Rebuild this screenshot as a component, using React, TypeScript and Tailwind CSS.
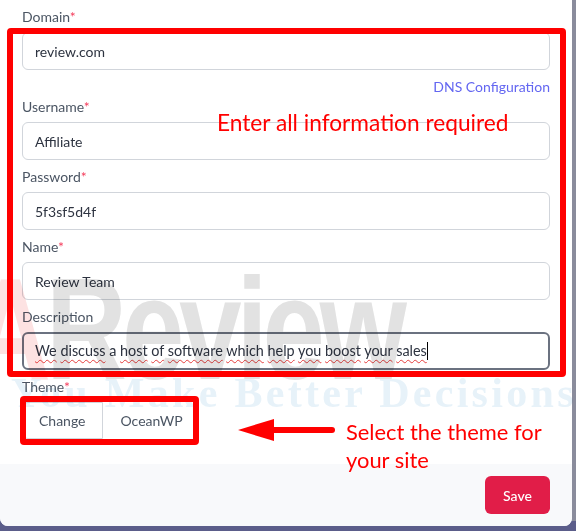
import React from "react";

const font = { fontFamily: "Lato, 'Noto Sans', sans-serif" };

function Label({ text, req = true }: { text: string; req?: boolean }) {
  return (
    <div className="h-5 leading-5 text-[14px] text-[#4b5563]">
      {text}
      {req && <span className="text-[#f43f5e]">*</span>}
    </div>
  );
}

function Input({ value }: { value: string }) {
  return (
    <div className="mt-[5px] h-[38px] rounded-md border border-[#d1d5db] bg-white px-3 flex items-center text-[14px] text-[#2d3340]">
      {value}
    </div>
  );
}

const words = "We discuss a host of software which help you boost your sales".split(" ");

export default function App() {
  return (
    <div className="relative w-[576px] h-[531px] bg-[#5b5d8a] overflow-hidden" style={font}>
      <div className="flex items-start">
        <div className="w-[572px] h-[526px] bg-white rounded-b-lg flex flex-col overflow-hidden">
          <div className="flex-1 px-[22px] pt-[7px]">
            <Label text="Domain" />
            <Input value="review.com" />
            <div className="h-5 mt-[7px] leading-5 text-right text-[14px] text-[#6366f1]">DNS Configuration</div>
            <div>
              <Label text="Username" />
              <Input value="Affiliate" />
            </div>
            <div className="mt-[7px]">
              <Label text="Password" />
              <Input value="5f3sf5d4f" />
            </div>
            <div className="mt-[7px]">
              <Label text="Name" />
              <Input value="Review Team" />
            </div>
            <div className="mt-[7px]">
              <Label text="Description" req={false} />
              <div className="mt-[5px] h-[38px] rounded-md border-2 border-[#6b7280] bg-white pl-[11px] flex items-center text-[14.4px] text-[#2d3340]">
                <span>
                  {words.map((w, i) => (
                    <React.Fragment key={i}>
                      {w === "a" ? (
                        <span>{w}</span>
                      ) : (
                        <span className="underline decoration-wavy decoration-[#e53e3e] decoration-1 underline-offset-[3px]">{w}</span>
                      )}
                      {i < words.length - 1 ? " " : ""}
                    </React.Fragment>
                  ))}
                </span>
                <span className="inline-block w-px h-[18px] bg-black" />
              </div>
            </div>
            <div className="mt-[7px]">
              <Label text="Theme" />
              <div className="mt-[5px] flex h-[37px] text-[14px] text-[#4b5563]">
                <div className="border border-[#d1d5db] rounded-l-md px-4 flex items-center bg-white">Change</div>
                <div className="pl-[18px] pr-4 flex items-center">OceanWP</div>
              </div>
            </div>
          </div>
          <div className="h-[62px] bg-[#f8f9fb] flex items-center justify-end pr-[22px]">
            <button className="h-[38px] w-[65px] rounded-md bg-[#e11d48] text-white text-[14px] font-medium">Save</button>
          </div>
        </div>
        <div className="w-[4px] h-[521px] bg-[#8a8c9c]" />
      </div>

      {/* watermark */}
      <div className="pointer-events-none absolute inset-0 mix-blend-multiply">
        <div
          className="absolute left-[-30px] top-[257px] text-[112px] leading-none font-bold text-[#fde2e2] origin-top scale-y-[1.3]"
          style={{ fontFamily: "'Liberation Sans', sans-serif" }}
        >
          A
        </div>
        <div
          className="absolute left-[46px] top-[257px] text-[112px] leading-none font-bold text-[#e2e2e2] tracking-[-5px] origin-top scale-y-[1.3]"
          style={{ fontFamily: "'Liberation Sans', sans-serif" }}
        >
          Review
        </div>
        <div
          className="absolute left-[11px] top-[372px] text-[42px] leading-none font-bold text-[#e7f2f9] whitespace-nowrap tracking-[3.3px]"
          style={{ fontFamily: "'Liberation Serif', serif" }}
        >
          You Make Better Decisions
        </div>
      </div>

      {/* annotations */}
      <div className="pointer-events-none absolute left-[7px] top-[28px] w-[559px] h-[349px] border-[6px] border-[#ff0000] rounded-[4px]" />
      <div className="pointer-events-none absolute left-[20px] top-[396px] w-[179px] h-[49px] border-[6px] border-[#ff0000] rounded-[4px]" />
      <div
        className="pointer-events-none absolute left-[217px] top-[109px] text-[22.7px] leading-[28px] text-[#ff0000] whitespace-nowrap"
        style={{ fontFamily: "Lato, sans-serif" }}
      >
        Enter all information required
      </div>
      <svg className="pointer-events-none absolute left-[236px] top-[418px]" width="100" height="26" viewBox="0 0 100 26">
        <polygon points="2,12 38,1 38,23" fill="#ff0000" />
        <line x1="36" y1="12" x2="96" y2="12" stroke="#ff0000" strokeWidth="6" strokeLinecap="round" />
      </svg>
      <div
        className="pointer-events-none absolute left-[346px] top-[418px] w-[215px] text-[21.9px] leading-[28px] text-[#ff0000]"
        style={{ fontFamily: "Lato, sans-serif" }}
      >
        Select the theme for your site
      </div>
    </div>
  );
}
